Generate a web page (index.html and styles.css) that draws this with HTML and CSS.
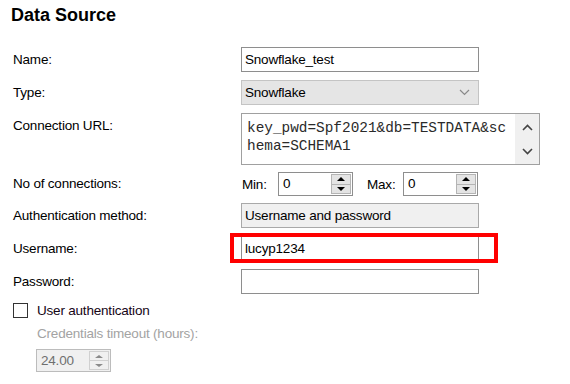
FILE: index.html
```html
<!DOCTYPE html>
<html lang="en">
<head>
    <meta charset="UTF-8">
    <title>Data Source</title>
    <link rel="stylesheet" href="styles.css">
</head>
<body>
    <div class="panel">
        <h1 class="title">Data Source</h1>

        <div class="form">
            <div class="lbl">Name:</div>
            <div class="field">Snowflake_test</div>

            <div class="lbl">Type:</div>
            <div class="field select">
                <span>Snowflake</span>
                <svg class="chev" width="11" height="7" viewBox="0 0 11 7"><path d="M1 1 L5.5 5.5 L10 1" fill="none" stroke="#8a8a8a" stroke-width="1.2"/></svg>
            </div>

            <div class="lbl">Connection URL:</div>
            <div class="field memo">
                <div class="memo-text">key_pwd=Spf2021&amp;db=TESTDATA&amp;sc<br>hema=SCHEMA1</div>
                <div class="memo-scroll">
                    <svg width="11" height="7" viewBox="0 0 11 7"><path d="M1 6 L5.5 1.5 L10 6" fill="none" stroke="#444" stroke-width="1.6"/></svg>
                    <svg width="11" height="7" viewBox="0 0 11 7"><path d="M1 1 L5.5 5.5 L10 1" fill="none" stroke="#444" stroke-width="1.6"/></svg>
                </div>
            </div>

            <div class="lbl conn-title">No of connections:</div>
            <div class="conn">
                <span class="conn-lbl">Min:</span>
                <div class="spin">
                    <span class="spin-val">0</span>
                    <div class="spin-btns">
                        <div class="spin-btn"><span class="tri-up"></span></div>
                        <div class="spin-btn"><span class="tri-down"></span></div>
                    </div>
                </div>
                <span class="conn-lbl max">Max:</span>
                <div class="spin">
                    <span class="spin-val">0</span>
                    <div class="spin-btns">
                        <div class="spin-btn"><span class="tri-up"></span></div>
                        <div class="spin-btn"><span class="tri-down"></span></div>
                    </div>
                </div>
            </div>

            <div class="lbl">Authentication method:</div>
            <div class="field readonly">Username and password</div>

            <div class="lbl">Username:</div>
            <div class="field highlighted">lucyp1234<span class="mark"></span></div>

            <div class="lbl">Password:</div>
            <div class="field"></div>
        </div>

        <div class="check-row">
            <span class="checkbox"></span>
            <span>User authentication</span>
        </div>
        <div class="sub">
            <div class="sub-lbl">Credentials timeout (hours):</div>
            <div class="spin disabled">
                <span class="spin-val">24.00</span>
                <div class="spin-btns">
                    <div class="spin-btn"><span class="tri-up"></span></div>
                    <div class="spin-btn"><span class="tri-down"></span></div>
                </div>
            </div>
        </div>
    </div>
</body>
</html>
```

FILE: styles.css
```css
* {
    box-sizing: border-box;
}

body {
    margin: 0;
    background: #fff;
    color: #000;
    font-family: "Liberation Sans", Arial, sans-serif;
    font-size: 13.5px;
    letter-spacing: -0.2px;
}

.title {
    margin: 0;
    padding: 4px 0 0 11px;
    font-size: 18px;
    line-height: 22px;
    font-weight: bold;
    letter-spacing: 0;
}

/* Form grid */
.form {
    display: grid;
    grid-template-columns: 228px 238px;
    row-gap: 8px;
    margin-top: 21px;
    padding-left: 13px;
}

.lbl {
    line-height: 25px;
    white-space: nowrap;
}

.lbl.conn-title {
    line-height: 22px;
}

.field {
    position: relative;
    height: 25px;
    border: 1px solid #8e8e8e;
    padding: 0 3px;
    line-height: 23px;
    white-space: nowrap;
    background: #fff;
}

.select {
    display: flex;
    align-items: center;
    justify-content: space-between;
    background: #e5e5e5;
    border-color: #c4c4c4;
    padding-right: 8px;
}

.readonly {
    background: #f0f0f0;
    border-color: #a9a9a9;
}

/* Connection URL memo */
.memo {
    display: flex;
    width: 299px;
    height: 52px;
    padding: 0;
    border-color: #a0a0a0;
}

.memo-text {
    flex: 1;
    padding: 5px 0 0 5px;
    font-family: "Liberation Mono", "Courier New", monospace;
    font-size: 14.4px;
    line-height: 18px;
    letter-spacing: 0;
    color: #2a2a2a;
}

.memo-scroll {
    width: 24px;
    background: #f0f0f0;
    display: flex;
    flex-direction: column;
    align-items: center;
    justify-content: space-between;
    padding: 10px 0 9px;
}

/* Connections */
.conn {
    display: flex;
    align-items: center;
    height: 22px;
    padding-left: 1px;
}

.conn-lbl {
    width: 36px;
}

.conn-lbl.max {
    width: 36px;
    margin-left: 14px;
}

.spin {
    display: flex;
    width: 75px;
    height: 24px;
    border: 1px solid #8e8e8e;
    background: #fff;
}

.spin-val {
    flex: 1;
    padding-left: 4px;
    line-height: 22px;
}

.spin-btns {
    width: 21px;
    display: flex;
    flex-direction: column;
    padding: 1px 1px 1px 0;
}

.spin-btn {
    flex: 1;
    display: flex;
    align-items: center;
    justify-content: center;
    background: #e4e4e4;
    border: 1px solid #b4b4b4;
}

.spin-btn + .spin-btn {
    border-top: none;
}

.tri-up {
    border-left: 4px solid transparent;
    border-right: 4px solid transparent;
    border-bottom: 4px solid #000;
}

.tri-down {
    border-left: 4px solid transparent;
    border-right: 4px solid transparent;
    border-top: 4px solid #000;
}

/* Annotation over the username box */
.mark {
    position: absolute;
    left: -12px;
    right: -20px;
    top: -4px;
    bottom: -3px;
    border: 4px solid #f00;
}

/* Checkbox + timeout */
.check-row {
    display: flex;
    align-items: center;
    gap: 9px;
    margin-top: 8px;
    padding-left: 13px;
    height: 17px;
    color: #150515;
}

.checkbox {
    width: 15px;
    height: 15px;
    border: 1px solid #333;
    background: #fff;
}

.sub {
    padding-left: 36px;
}

.sub-lbl {
    color: #a3a3a3;
    line-height: 20px;
    margin-top: 5px;
    padding-left: 1px;
}

.spin.disabled {
    margin-top: 5px;
    height: 23px;
    background: #f0f0f0;
    border-color: #bcbcbc;
    color: #6f6f6f;
}

.spin.disabled .spin-btn {
    background: #f0f0f0;
    border-color: #d0d0d0;
}

.spin.disabled .tri-up {
    border-bottom-color: #8a8a8a;
    border-bottom-width: 3px;
}

.spin.disabled .tri-down {
    border-top-color: #8a8a8a;
    border-top-width: 3px;
}
```
